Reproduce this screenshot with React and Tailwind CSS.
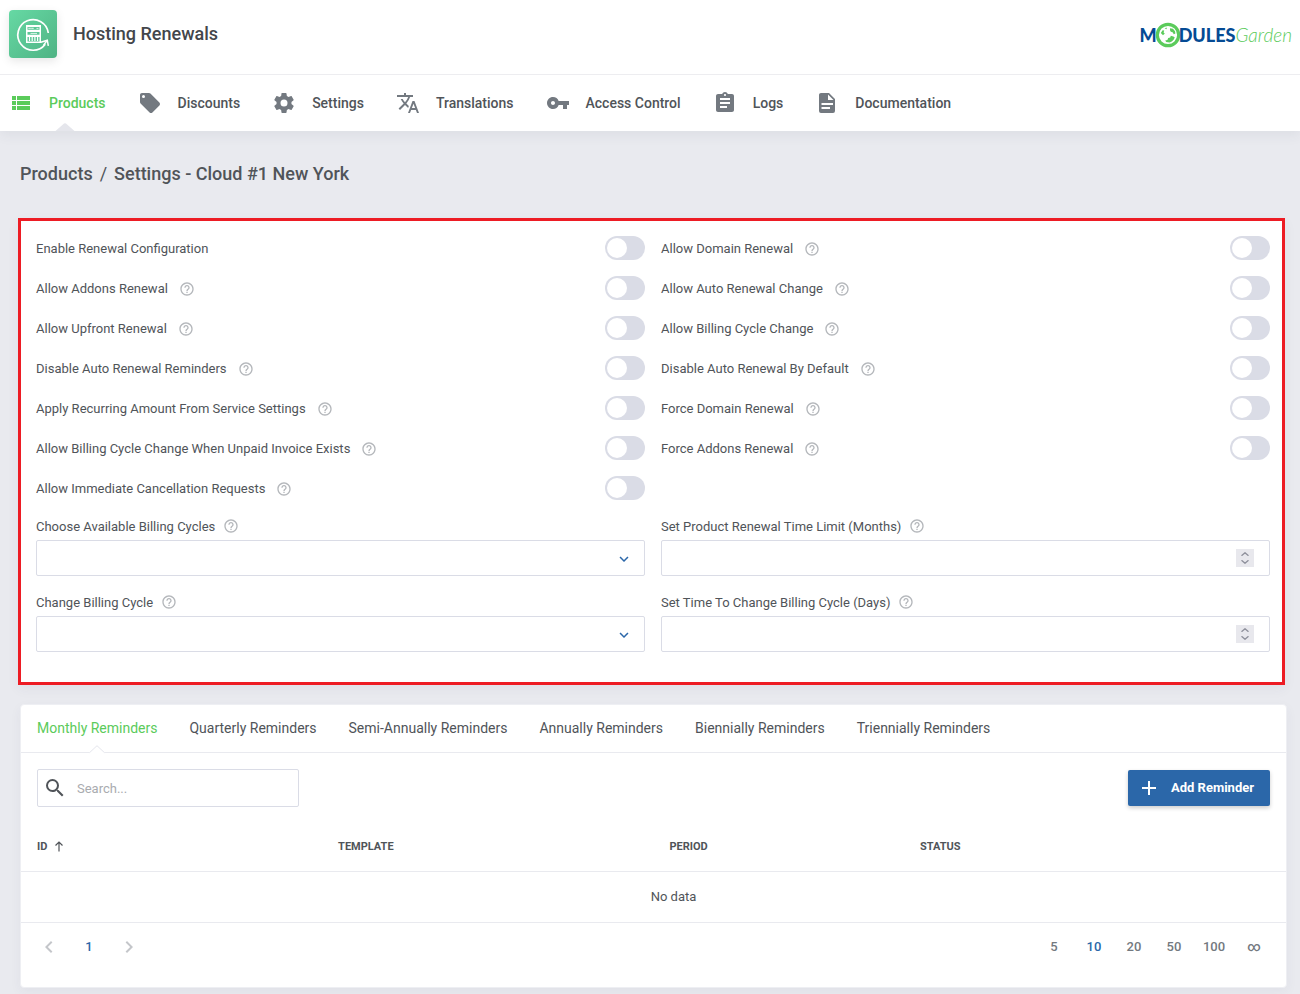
import { useState } from "react";
import {
  MdViewList,
  MdTranslate,
  MdVpnKey,
  MdAssignment,
  MdHelpOutline,
  MdSearch,
  MdAdd,
  MdChevronLeft,
  MdChevronRight,
  MdExpandMore,
} from "react-icons/md";

function FileIcon({ className }) {
  return (
    <svg viewBox="0 0 24 24" fill="currentColor" className={className} aria-hidden="true">
      <path d="M13 9h5.500L13 3.500V9M6 2h8l6 6v12a2 2 0 0 1-2 2H6a2 2 0 0 1-2-2V4c0-1.110.89-2 2-2m9 16v-2H6.500v2H15m3-4v-2H6.500v2H18z" />
    </svg>
  );
}

function TagIcon({ className }) {
  return (
    <svg viewBox="0 0 24 24" fill="currentColor" className={className} aria-hidden="true">
      <path d="M5.500 7A1.500 1.500 0 0 1 4 5.500 1.500 1.500 0 0 1 5.500 4 1.500 1.500 0 0 1 7 5.500 1.500 1.500 0 0 1 5.500 7m15.910 4.580l-9-9C12.050 2.220 11.550 2 11 2H4c-1.110 0-2 .89-2 2v7c0 .55.22 1.050.59 1.410l8.990 9c.37.36.87.59 1.420.59s1.050-.23 1.410-.59l7-7c.37-.36.59-.86.59-1.410 0-.56-.23-1.060-.59-1.420z" />
    </svg>
  );
}

function CogIcon({ className }) {
  return (
    <svg viewBox="0 0 24 24" fill="currentColor" className={className} aria-hidden="true">
      <path d="M12 15.500A3.500 3.500 0 0 1 8.500 12 3.500 3.500 0 0 1 12 8.500a3.500 3.500 0 0 1 3.500 3.500 3.500 3.500 0 0 1-3.500 3.500m7.430-2.530c.04-.32.07-.64.07-.97s-.03-.66-.07-1l2.110-1.630c.19-.15.24-.42.12-.64l-2-3.460c-.12-.22-.39-.31-.61-.22l-2.490 1c-.52-.39-1.060-.73-1.690-.98l-.37-2.650A.506.506 0 0 0 14 2h-4c-.25 0-.46.18-.5.42l-.37 2.650c-.63.25-1.170.59-1.690.98l-2.490-1c-.22-.09-.49 0-.61.22l-2 3.460c-.13.22-.07.49.12.64L4.570 11c-.04.34-.07.67-.07 1s.03.65.07.97l-2.110 1.660c-.19.15-.25.42-.12.64l2 3.460c.12.22.39.3.61.22l2.490-1.010c.52.4 1.060.74 1.690.99l.37 2.650c.04.24.25.42.5.42h4c.25 0 .46-.18.5-.42l.37-2.650c.63-.26 1.170-.59 1.690-.99l2.490 1.010c.22.08.49 0 .61-.22l2-3.460c.12-.22.07-.49-.12-.64l-2.110-1.660z" />
    </svg>
  );
}

const navItems = [
  { label: "Products", Icon: MdViewList, active: true },
  { label: "Discounts", Icon: TagIcon },
  { label: "Settings", Icon: CogIcon },
  { label: "Translations", Icon: MdTranslate },
  { label: "Access Control", Icon: MdVpnKey },
  { label: "Logs", Icon: MdAssignment },
  { label: "Documentation", Icon: FileIcon },
];

const toggles = [
  { label: "Enable Renewal Configuration", noHelp: true },
  { label: "Allow Domain Renewal" },
  { label: "Allow Addons Renewal" },
  { label: "Allow Auto Renewal Change" },
  { label: "Allow Upfront Renewal" },
  { label: "Allow Billing Cycle Change" },
  { label: "Disable Auto Renewal Reminders" },
  { label: "Disable Auto Renewal By Default" },
  { label: "Apply Recurring Amount From Service Settings" },
  { label: "Force Domain Renewal" },
  { label: "Allow Billing Cycle Change When Unpaid Invoice Exists" },
  { label: "Force Addons Renewal" },
  { label: "Allow Immediate Cancellation Requests" },
];

const fields = [
  { id: "available-cycles", label: "Choose Available Billing Cycles", type: "select" },
  { id: "time-limit", label: "Set Product Renewal Time Limit (Months)", type: "number" },
  { id: "change-cycle", label: "Change Billing Cycle", type: "select" },
  { id: "time-to-change", label: "Set Time To Change Billing Cycle (Days)", type: "number" },
];

const tabs = [
  "Monthly Reminders",
  "Quarterly Reminders",
  "Semi-Annually Reminders",
  "Annually Reminders",
  "Biennially Reminders",
  "Triennially Reminders",
];

function AppIcon() {
  return (
    <div className="flex size-12 items-center justify-center rounded bg-linear-to-br from-[#66d9a4] to-[#4fb384] shadow-[0_3px_10px_rgba(0,0,0,0.1)]">
      <svg viewBox="0 0 48 48" className="size-12" fill="none" stroke="#fff" aria-hidden="true">
        <path d="M36.300 34.200A15.300 15.300 0 1 1 39.300 23" strokeWidth="1.700" />
        <path d="M31.800 32.300L38.300 30.200L39.300 35.800" strokeWidth="1.500" />
        <path d="M38 30.500L34.300 35.600" strokeWidth="1.500" />
        <rect x="17" y="15" width="15" height="18" fill="#fff" stroke="none" />
        <path
          d="M18.500 17H30.500V19.800H18.500Z M18.500 22H30.500V24.800H18.500Z M18.500 27H30.500V31.500H18.500Z"
          fill="#5cc696"
          stroke="none"
        />
        <path d="M19.500 18.400H24.500" strokeWidth="1.300" strokeDasharray="1.200 0.700" />
        <path d="M27.500 18.400H29.500 M21.500 23.400H28" strokeWidth="0.800" />
        <path d="M20.500 27V31 M23.200 27V31 M25.900 27V31 M28.600 27V31" strokeWidth="1.200" />
      </svg>
    </div>
  );
}

function BrandLogo() {
  return (
    <a href="#home" className="flex items-center text-[#054b94]" aria-label="ModulesGarden">
      <span className="font-['Lato'] text-lg font-black">M</span>
      <svg viewBox="0 0 26 26" className="-mx-0.5 size-[26px]" aria-hidden="true">
        <circle cx="13" cy="13" r="10.700" fill="#fff" stroke="#5bcb5b" strokeWidth="3.200" />
        <path
          d="M5.800 11L7.600 8.200L9.200 8.600L8.600 10.400L9.800 11.400L8 13.200ZM9.600 6.600L11.600 5.600L11.800 7.200ZM15 6.200L18 6.800L20 9.200L20.400 11.600L18.800 12.200L17.600 10.200L15.800 9.800L15 8.200ZM13.200 16L15.200 15.400L15.800 13.800L18.400 14.400L19.800 15.600L18.600 17.800L16.800 19.400L14.600 20.400L11.200 20L10.200 18.600L12.400 18Z"
          fill="#5bcb5b"
        />
      </svg>
      <span className="font-['Lato'] text-lg font-black">DULES</span>
      <span className="font-['Lato'] text-[19px] font-light text-[#5bcb5b] italic">Garden</span>
    </a>
  );
}

function HelpButton({ label }) {
  return (
    <button type="button" aria-label={`Help: ${label}`} className="text-[#b4b7bb]">
      <MdHelpOutline className="size-4" />
    </button>
  );
}

function ToggleRow({ id, label, noHelp }) {
  return (
    <div className="flex h-10 items-center">
      <label htmlFor={id} className="pt-0.5">
        {label}
      </label>
      {!noHelp && (
        <span className="ml-[11px] flex pt-0.5">
          <HelpButton label={label} />
        </span>
      )}
      <input
        id={id}
        type="checkbox"
        className="ml-auto h-6 w-10 cursor-pointer appearance-none rounded-full bg-[#dadce6] before:m-0.5 before:block before:size-5 before:rounded-full before:bg-white checked:bg-[#5bcb5b] checked:before:ml-[18px]"
      />
    </div>
  );
}

function SelectField({ id }) {
  return (
    <div className="relative">
      <select
        id={id}
        className="block h-9 w-full appearance-none rounded-xs border border-[#dadce6] bg-white px-3"
      />
      <MdExpandMore className="pointer-events-none absolute top-2.5 right-3 size-[18px] text-[#2b67a9]" />
    </div>
  );
}

function NumberField({ id }) {
  const [value, setValue] = useState("");
  const step = (by) => setValue(String(Number(value) + by));
  return (
    <div className="flex h-9 items-center rounded-xs border border-[#dadce6] bg-white pr-[15px]">
      <input
        id={id}
        type="number"
        value={value}
        onChange={(e) => setValue(e.target.value)}
        className="h-full min-w-0 grow bg-transparent px-3 outline-none [appearance:textfield]"
      />
      <div className="flex size-[18px] flex-col items-center justify-center gap-1 bg-[#e8e8ed] text-[#8f919c]">
        <button type="button" aria-label="Increase" onClick={() => step(1)}>
          <svg viewBox="0 0 8 4" className="h-1 w-2" fill="none" stroke="currentColor" strokeWidth="1.400">
            <path d="M0.500 3.700L4 0.800L7.500 3.700" />
          </svg>
        </button>
        <button type="button" aria-label="Decrease" onClick={() => step(-1)}>
          <svg viewBox="0 0 8 4" className="h-1 w-2" fill="none" stroke="currentColor" strokeWidth="1.400">
            <path d="M0.500 0.300L4 3.200L7.500 0.300" />
          </svg>
        </button>
      </div>
    </div>
  );
}

function SettingsPanel() {
  return (
    <section className="mr-[15px] ml-[18px] border-[3px] border-[#ed1c24] bg-white pt-[7px] pr-3 pb-[30px] pl-[15px] shadow-[0_4px_12px_rgba(60,64,90,0.05)]">
      <div className="grid grid-cols-2 gap-x-4">
        {toggles.map((t, i) => (
          <ToggleRow key={t.label} id={`toggle-${i}`} {...t} />
        ))}
      </div>
      <div className="mt-2 grid grid-cols-2 gap-4">
        {fields.map((f) => (
          <div key={f.id}>
            <div className="flex h-6 items-start gap-2">
              <label htmlFor={f.id} className="leading-[22px]">
                {f.label}
              </label>
              <span className="flex h-5 items-center">
                <HelpButton label={f.label} />
              </span>
            </div>
            {f.type === "select" ? <SelectField id={f.id} /> : <NumberField id={f.id} />}
          </div>
        ))}
      </div>
    </section>
  );
}

function RemindersPanel() {
  return (
    <section className="mt-[19px] mr-[13px] ml-5 rounded border border-[#eeeff3] bg-white shadow-[0_4px_12px_rgba(60,64,90,0.05)]">
      <div role="tablist" className="flex h-12 gap-8 border-b border-[#e9eaef] px-4">
        {tabs.map((t, i) => (
          <button
            key={t}
            type="button"
            role="tab"
            aria-selected={i === 0}
            className={
              i === 0
                ? "relative pb-0.5 text-sm text-[#5bcb5b]"
                : "relative pb-0.5 text-sm text-[#505459]"
            }
          >
            {t}
            {i === 0 && (
              <svg
                viewBox="0 0 16 9"
                className="absolute top-[40px] left-1/2 h-[9px] w-4 -translate-x-1/2"
                aria-hidden="true"
              >
                <path d="M0.500 9V7.500L8 0.500L15.500 7.500V9Z" fill="#fff" />
                <path d="M0.500 7.700L8 0.700L15.500 7.700" fill="none" stroke="#e4e5ec" />
              </svg>
            )}
          </button>
        ))}
      </div>
      <div className="flex items-center justify-between p-4">
        <label className="flex h-[38px] w-[262px] items-center rounded-xs border border-[#dadce6] pl-[5px]">
          <MdSearch className="size-6 text-[#505459]" />
          <input
            type="search"
            aria-label="Search"
            placeholder="Search..."
            className="ml-2.5 min-w-0 grow bg-transparent pt-0.5 outline-none placeholder:text-[#a9abaf]"
          />
        </label>
        <button
          type="button"
          className="flex h-9 items-center gap-2.5 rounded-xs bg-[#2b67a9] pr-4 pl-[9px] font-bold text-white shadow-[0_2px_4px_rgba(0,0,0,0.2)]"
        >
          <MdAdd className="size-6" />
          Add Reminder
        </button>
      </div>
      <table className="w-full table-fixed">
        <thead>
          <tr className="h-12 border-b border-[#e9eaef] text-left text-[11px]">
            <th className="w-[23.8%] pl-4 font-bold">
              <button type="button" className="flex items-center gap-[7px] font-bold">
                ID
                <svg viewBox="0 0 10 12" className="h-3 w-2.5" fill="none" stroke="currentColor" aria-hidden="true">
                  <path d="M5 10.500V1M1.500 4.500L5 1L8.500 4.500" strokeWidth="1.200" />
                </svg>
              </button>
            </th>
            <th className="w-[26.2%] pl-4 font-bold">TEMPLATE</th>
            <th className="w-[19.8%] pl-4 font-bold">PERIOD</th>
            <th className="pl-4 font-bold">STATUS</th>
          </tr>
        </thead>
        <tbody>
          <tr className="h-[51px] border-b border-[#e9eaef] text-center">
            <td colSpan={4} className="pl-10">
              No data
            </td>
          </tr>
        </tbody>
      </table>
      <div className="flex items-center justify-between pt-1 pr-3 pb-5 pl-2 font-medium text-[#737980]">
        <div className="flex">
          <button type="button" aria-label="Previous page" className="flex size-10 items-center justify-center text-[#c4c6ca]">
            <MdChevronLeft className="size-6" />
          </button>
          <button type="button" className="size-10 text-[#2b67a9]">
            1
          </button>
          <button type="button" aria-label="Next page" className="flex size-10 items-center justify-center text-[#c4c6ca]">
            <MdChevronRight className="size-6" />
          </button>
        </div>
        <div className="flex">
          {["5", "10", "20", "50", "100", "∞"].map((n) => (
            <button key={n} type="button" className={n === "10" ? "size-10 text-[#2b67a9]" : "size-10"}>
              {n}
            </button>
          ))}
        </div>
      </div>
    </section>
  );
}

export default function App() {
  return (
    <div className="min-h-screen bg-[#e9eaef] pb-1.5 font-['Roboto',sans-serif] text-[13px] leading-5 text-[#505459]">
      <header className="bg-white shadow-[0_4px_12px_rgba(60,64,90,0.07)]">
        <div className="flex h-[75px] items-start justify-between border-b border-[#ededf0] pt-2.5 pr-2 pl-[9px]">
          <div className="flex h-12 items-center gap-4">
            <AppIcon />
            <h1 className="text-lg font-medium text-[#43464b]">Hosting Renewals</h1>
          </div>
          <div className="flex h-[50px] items-center">
            <BrandLogo />
          </div>
        </div>
        <nav className="flex h-14 pl-px">
          {navItems.map(({ label, Icon, active }) => (
            <a
              key={label}
              href={`#${label}`}
              className={
                active
                  ? "relative flex items-center gap-4 pr-6 pl-2 text-sm font-medium text-[#5bcb5b]"
                  : "flex items-center gap-4 pr-6 pl-2 text-sm font-medium"
              }
            >
              <Icon className={active ? "size-6" : "size-6 text-[#737980]"} />
              {label}
              {active && (
                <svg
                  viewBox="0 0 20 8"
                  className="absolute bottom-0 left-1/2 h-2 w-5 -translate-x-1/2"
                  aria-hidden="true"
                >
                  <path d="M0.500 8L9 0.600Q10 0 11 0.600L19.500 8Z" fill="#e5e6ec" />
                </svg>
              )}
            </a>
          ))}
        </nav>
      </header>
      <main>
        <h2 className="flex h-[87px] items-center gap-[7px] pb-0.5 pl-5 text-lg font-medium">
          <a href="#products">Products</a>
          <span className="font-normal">/</span>
          <span>Settings - Cloud #1 New York</span>
        </h2>
        <SettingsPanel />
        <RemindersPanel />
      </main>
    </div>
  );
}
